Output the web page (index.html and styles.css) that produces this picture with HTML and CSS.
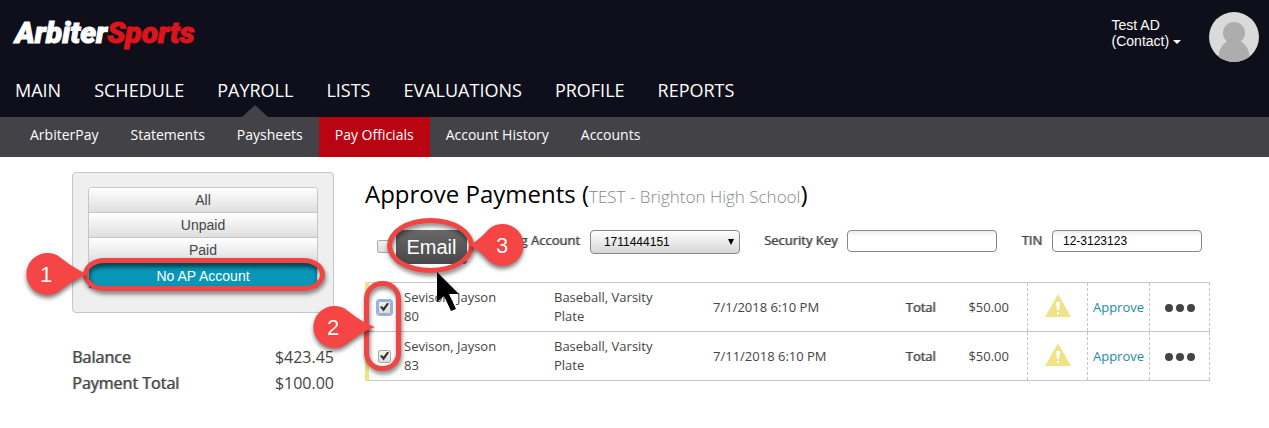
FILE: index.html
```html
<!DOCTYPE html>
<html lang="en">
  <head>
    <meta charset="UTF-8" />
    <meta name="viewport" content="width=device-width, initial-scale=1.0" />
    <title>ArbiterSports - Approve Payments</title>
    <link rel="stylesheet" href="styles.css">
  </head>
  <body>
    <header class="header">
      <div class="top">
        <a href="#" class="logo">Arbiter<span>Sports</span></a>
        <div class="user">
          <button type="button" class="user-menu">Test AD<br />(Contact) <i class="caret"></i></button>
          <svg class="avatar" viewBox="0 0 50 50">
            <clipPath id="round"><circle cx="25" cy="25" r="25" /></clipPath>
            <g clip-path="url(#round)">
              <rect width="50" height="50" fill="#dadada" />
              <circle cx="25" cy="21" r="11" fill="#adadad" />
              <path d="M9 50C9 38 13 32 19 29H31C37 32 41 38 41 50Z" fill="#adadad" />
            </g>
          </svg>
        </div>
      </div>
      <nav class="main-nav">
        <a href="#">MAIN</a>
        <a href="#">SCHEDULE</a>
        <a href="#" class="current">PAYROLL</a>
        <a href="#">LISTS</a>
        <a href="#">EVALUATIONS</a>
        <a href="#">PROFILE</a>
        <a href="#">REPORTS</a>
      </nav>
    </header>

    <nav class="sub-nav">
      <a href="#">ArbiterPay</a>
      <a href="#">Statements</a>
      <a href="#">Paysheets</a>
      <a href="#" class="active">Pay Officials</a>
      <a href="#">Account History</a>
      <a href="#">Accounts</a>
    </nav>

    <div class="page">
      <aside class="sidebar">
        <div class="filters">
          <div class="filter-list">
            <button type="button">All</button>
            <button type="button">Unpaid</button>
            <button type="button">Paid</button>
            <button type="button" class="selected">No AP Account</button>
            <span class="ring ring-account"></span>
            <svg class="marker marker-1" viewBox="0 0 64 42">
              <path d="M63 21C52 17 44 11 36 5A21 21 0 1 0 36 37C44 31 52 25 63 21Z" />
              <text x="21" y="29">1</text>
            </svg>
          </div>
        </div>
        <dl class="totals">
          <div><dt>Balance</dt><dd>$423.45</dd></div>
          <div><dt>Payment Total</dt><dd>$100.00</dd></div>
        </dl>
      </aside>

      <main class="content">
        <h1>Approve Payments (<small>TEST - Brighton High School</small>)</h1>

        <form class="tools">
          <input type="checkbox" class="check" aria-label="Select all" />
          <div class="email">
            <button type="button">Email</button>
            <span class="ring ring-email"></span>
            <svg class="marker marker-3" viewBox="0 0 56 42">
              <path d="M1 21C10 17 15 11 21 5A21 21 0 1 1 21 37C15 31 10 25 1 21Z" />
              <text x="34" y="29">3</text>
            </svg>
            <svg class="cursor" viewBox="0 0 22 40">
              <path d="M0 0V30L7 24L14 39L19 37L12 22H22Z" />
            </svg>
          </div>
          <label for="account" class="account-label">g Account</label>
          <span class="select">
            <select id="account">
              <option>1711444151</option>
            </select>
          </span>
          <label for="key">Security Key</label>
          <input type="text" id="key" class="field" />
          <label for="tin">TIN</label>
          <input type="text" id="tin" class="field" value="12-3123123" />
        </form>

        <div class="payments">
          <table>
            <tr>
              <td class="pick"><input type="checkbox" class="check focused" aria-label="Select Sevison, Jayson 80" checked /></td>
              <td class="name">Sevison, Jayson<br />80</td>
              <td class="game">Baseball, Varsity<br />Plate</td>
              <td>7/1/2018 6:10 PM</td>
              <td class="total">Total</td>
              <td class="amount">$50.00</td>
              <td class="action">
                <svg class="warning" viewBox="0 0 26 23"><path d="M13 0L26 23H0Z" fill="#efe287" /><path d="M11 8H15L14 16H12ZM12 18H14V20H12Z" fill="#fff" /></svg>
              </td>
              <td class="action approve"><a href="#">Approve</a></td>
              <td class="action">
                <button type="button" class="more" aria-label="More"><i></i><i></i><i></i></button>
              </td>
            </tr>
            <tr>
              <td class="pick"><input type="checkbox" class="check" aria-label="Select Sevison, Jayson 83" checked /></td>
              <td class="name">Sevison, Jayson<br />83</td>
              <td class="game">Baseball, Varsity<br />Plate</td>
              <td>7/11/2018 6:10 PM</td>
              <td class="total">Total</td>
              <td class="amount">$50.00</td>
              <td class="action">
                <svg class="warning" viewBox="0 0 26 23"><path d="M13 0L26 23H0Z" fill="#efe287" /><path d="M11 8H15L14 16H12ZM12 18H14V20H12Z" fill="#fff" /></svg>
              </td>
              <td class="action approve"><a href="#">Approve</a></td>
              <td class="action">
                <button type="button" class="more" aria-label="More"><i></i><i></i><i></i></button>
              </td>
            </tr>
          </table>
          <span class="ring ring-rows"></span>
          <svg class="marker marker-2" viewBox="0 0 64 42">
            <path d="M63 21C52 17 44 11 36 5A21 21 0 1 0 36 37C44 31 52 25 63 21Z" />
            <text x="21" y="29">2</text>
          </svg>
        </div>
      </main>
    </div>
  </body>
</html>
```
FILE: styles.css
```css
* {
  box-sizing: border-box;
}

body {
  margin: 0;
  background: #fff;
  color: #444;
  font-family: "Open Sans", sans-serif;
  font-size: 13px;
}

a {
  text-decoration: none;
}

button {
  padding: 0;
  border: none;
  cursor: pointer;
}

/* header */
.header {
  background: #0e0f1a;
}

.top {
  display: flex;
  justify-content: space-between;
  align-items: flex-start;
  height: 64px;
  padding: 12px 10px 0 15px;
}

.logo {
  color: #fff;
  font-family: Roboto, sans-serif;
  font-size: 30px;
  font-style: italic;
  font-weight: 900;
  line-height: 42px;
  -webkit-text-stroke: 1px;
}

.logo span {
  color: #dc141c;
}

.user {
  display: flex;
  gap: 28px;
}

.user-menu {
  align-self: flex-start;
  margin-top: 5px;
  background: none;
  color: #fff;
  font-family: "Liberation Sans", Arial, sans-serif;
  font-size: 14px;
  line-height: 16px;
  text-align: left;
}

.caret {
  display: inline-block;
  border: 4px solid transparent;
  border-top-color: #fff;
  border-bottom: 0;
  vertical-align: middle;
}

.avatar {
  width: 50px;
  height: 50px;
}

.main-nav {
  display: flex;
  gap: 33px;
  padding: 0 15px;
}

.main-nav a {
  position: relative;
  color: #fff;
  font-size: 18px;
  line-height: 53px;
}

.main-nav .current::after {
  content: "";
  position: absolute;
  bottom: 0;
  left: 50%;
  margin-left: -13px;
  border: 13px solid transparent;
  border-top: 0;
  border-bottom: 12px solid #424247;
}

.sub-nav {
  display: flex;
  padding: 0 14px;
  background: #424247;
}

.sub-nav a {
  padding: 0 16px 4px;
  color: #fff;
  font-size: 14px;
  line-height: 36px;
}

.sub-nav .active {
  background: #b90511;
}

/* page */
.page {
  display: flex;
  gap: 31px;
  padding: 15px 59px 0 72px;
}

.sidebar {
  flex: 0 0 262px;
}

.filters {
  padding: 14px 15px 23px;
  border: 1px solid #c6c6c6;
  border-radius: 4px;
  background: #efefef;
}

.filter-list {
  position: relative;
  display: flex;
  flex-direction: column;
  border: 1px solid #c6c6c6;
  border-radius: 4px;
}

.filter-list button {
  height: 25px;
  border-bottom: 1px solid #c6c6c6;
  background: linear-gradient(#fff, #dedede);
  color: #444;
  font-family: "Liberation Sans", Arial, sans-serif;
  font-size: 14px;
}

.filter-list button:first-child {
  border-radius: 3px 3px 0 0;
}

.filter-list .selected {
  border-bottom: none;
  background: #0997b7;
  box-shadow: inset 0 4px 5px #04708a;
  color: #fff;
}

.totals {
  margin: 31px 0 0;
  font-size: 16px;
  line-height: 26px;
}

.totals div {
  display: flex;
  justify-content: space-between;
}

.totals dt,
.tools label,
.total {
  text-shadow: 1px 0 rgba(68, 68, 68, 0.6);
}

.totals dd {
  margin: 0;
}

.content {
  flex: 1;
}

h1 {
  margin: 5px 0 0;
  color: #000;
  font-size: 24px;
  font-weight: 400;
  line-height: 34px;
}

h1 small {
  color: #888;
  font-size: 17px;
  font-weight: 300;
  line-height: 20px;
}

.tools {
  display: flex;
  align-items: flex-start;
  height: 52px;
  margin-top: 19px;
  padding: 0 8px 0 12px;
}

.tools .check {
  margin: 10px 6px 0 0;
}

.tools label {
  margin: 0 10px 0 24px;
  line-height: 20px;
}

.tools .account-label {
  margin-left: auto;
}

.email {
  position: relative;
}

.email button {
  width: 71px;
  height: 34px;
  border-radius: 4px;
  background: linear-gradient(#686868, #484848);
  color: #fff;
  font-family: "Liberation Sans", Arial, sans-serif;
  font-size: 20px;
}

.field,
.select select {
  width: 150px;
  height: 22px;
  padding: 0 10px;
  border: 1px solid #888;
  border-radius: 4px;
  background: linear-gradient(#eee, #fff 6px);
  color: #000;
  font-family: "Liberation Sans", Arial, sans-serif;
  font-size: 12px;
}

.select {
  position: relative;
}

.select select {
  height: 24px;
  padding: 0 13px;
  background: linear-gradient(#fff, #d6d6d6);
  appearance: none;
}

.select::after {
  content: "";
  position: absolute;
  top: 9px;
  right: 6px;
  border: 3px solid transparent;
  border-top: 6px solid #000;
  border-bottom: 0;
}

.check {
  display: grid;
  place-items: center;
  width: 13px;
  height: 13px;
  margin: 0;
  border: 1px solid #aaa;
  border-radius: 2px;
  background: linear-gradient(#f2f2f2, #ddd);
  appearance: none;
}

.check:checked::before {
  content: "";
  width: 9px;
  height: 9px;
  background: #333;
  clip-path: polygon(0 50%, 20% 38%, 38% 58%, 82% 0, 100% 14%, 40% 100%);
}

.focused {
  box-shadow: 0 0 0 2px #8db4ec;
}

/* payments */
.payments {
  position: relative;
}

table {
  width: 100%;
  border-collapse: collapse;
  border-left: 4px solid #efe287;
}

tr {
  border-top: 1px solid #c6c6c6;
  border-bottom: 1px solid #c6c6c6;
}

td {
  height: 49px;
  padding: 0;
  line-height: 19px;
}

.pick {
  width: 37px;
  padding-left: 9px;
}

.name {
  width: 150px;
}

.game {
  width: 159px;
}

.total {
  width: 60px;
}

.amount {
  width: 62px;
  padding-right: 18px;
  text-align: right;
}

.action {
  width: 60px;
  border: 1px dashed #c6c6c6;
  border-top: none;
  border-bottom: none;
  text-align: center;
}

.approve {
  width: 62px;
}

.approve a {
  color: #1c8ba5;
}

.warning {
  display: block;
  width: 26px;
  height: 23px;
  margin: -4px auto 0;
}

.more {
  display: inline-flex;
  gap: 3px;
  background: none;
  vertical-align: middle;
}

.more i {
  width: 8px;
  height: 8px;
  border-radius: 50%;
  background: #444;
}

/* step markers */
.ring {
  position: absolute;
  border: 5px solid #ee4545;
  filter: drop-shadow(1px 3px 2px rgba(0, 0, 0, 0.5));
  pointer-events: none;
}

.ring-account {
  right: -8px;
  bottom: -3px;
  left: -6px;
  height: 33px;
  border-radius: 22px / 17px;
}

.ring-rows {
  top: -1px;
  left: -1px;
  width: 37px;
  height: 90px;
  border-radius: 18px;
}

.ring-email {
  top: -12px;
  left: -9px;
  width: 87px;
  height: 55px;
  border-radius: 50%;
}

.marker {
  position: absolute;
  width: 64px;
  height: 42px;
  overflow: visible;
  filter: drop-shadow(0 3px 2px rgba(0, 0, 0, 0.5));
  pointer-events: none;
}

.marker path {
  fill: #f54545;
}

.marker text {
  fill: #fff;
  font-family: "Liberation Sans", Arial, sans-serif;
  font-size: 22px;
  text-anchor: middle;
}

.marker-1 {
  bottom: -7px;
  left: -64px;
}

.marker-2 {
  top: 24px;
  left: -53px;
}

.marker-3 {
  top: -6px;
  left: 72px;
  width: 56px;
}

.cursor {
  position: absolute;
  top: 42px;
  left: 41px;
  width: 22px;
  height: 40px;
  pointer-events: none;
  z-index: 1;
}
```
